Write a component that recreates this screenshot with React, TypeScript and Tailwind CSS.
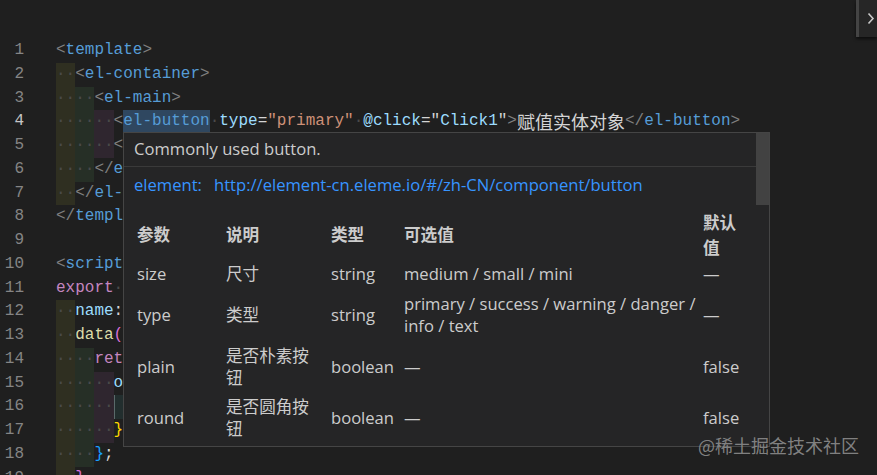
import React from "react";

type Tok = [string, string, string?];

const P = "#808080";
const TAG = "#569cd6";
const ATTR = "#9cdcfe";
const STR = "#ce9178";
const TXT = "#d4d4d4";
const KW = "#c586c0";
const FN = "#dcdcaa";
const GOLD = "#ffd700";
const ORCH = "#da70d6";
const BLUE = "#179fff";
const DOT = "#4a4a4a";

const INDENT_BG = ["#2f2f21", "#262f26", "#2f262f", "#222e2e"];

const lines: { indent: number; toks: Tok[] }[] = [
  { indent: 0, toks: [["<", P], ["template", TAG], [">", P]] },
  { indent: 1, toks: [["<", P], ["el-container", TAG], [">", P]] },
  { indent: 2, toks: [["<", P], ["el-main", TAG], [">", P]] },
  {
    indent: 3,
    toks: [
      ["<", P],
      ["el-button", TAG, "hl"],
      ["·", DOT],
      ["type", ATTR],
      ["=", TXT],
      ['"primary"', STR],
      ["·", DOT],
      ["@click", ATTR],
      ["=", TXT],
      ['"', TXT],
      ["Click1", ATTR],
      ['"', TXT],
      [">", P],
      ["赋值实体对象", TXT, "cjk"],
      ["</", P],
      ["el-button", TAG],
      [">", P],
    ],
  },
  { indent: 3, toks: [["<", P]] },
  { indent: 2, toks: [["</", P], ["e", TAG]] },
  { indent: 1, toks: [["</", P], ["el-", TAG]] },
  { indent: 0, toks: [["</", P], ["templ", TAG]] },
  { indent: 0, toks: [] },
  { indent: 0, toks: [["<", P], ["script", TAG]] },
  { indent: 0, toks: [["export", KW], ["·", DOT]] },
  { indent: 1, toks: [["name", ATTR], [":", TXT]] },
  { indent: 1, toks: [["data", FN], ["(", ORCH]] },
  { indent: 2, toks: [["ret", KW]] },
  { indent: 3, toks: [["o", ATTR]] },
  { indent: 4, toks: [] },
  { indent: 3, toks: [["}", GOLD]] },
  { indent: 2, toks: [["}", BLUE], [";", TXT]] },
  { indent: 1, toks: [["}", ORCH]] },
];

function CodeLine({ n, indent, toks }: { n: number; indent: number; toks: Tok[] }) {
  const shown = n === 16 ? 3 : indent;
  return (
    <div className="flex h-[23.76px] leading-[23.76px] whitespace-pre">
      <div className={`w-[24px] shrink-0 text-right ${n === 4 ? "text-[#c6c6c6]" : "text-[#858585]"}`}>{n}</div>
      <div className="ml-[32px] flex">
        {Array.from({ length: shown }).map((_, i) => (
          <span key={i} className="shrink-0 text-[#4a4a4a]" style={{ backgroundColor: INDENT_BG[i % 4] }}>
            ··
          </span>
        ))}
        {n === 16 && <span className="w-[9px] shrink-0 border-l border-[#5a6a6a] bg-[#222e2e]" />}
        {toks.map((t, i) =>
          t[2] === "cjk" ? (
            <span key={i} className="shrink-0 font-['Noto_Sans_CJK_SC',sans-serif] text-[18px]" style={{ color: t[1] }}>
              {t[0]}
            </span>
          ) : (
            <span key={i} className={`shrink-0 ${t[2] === "hl" ? "bg-[#2f4760]" : ""}`} style={{ color: t[1] }}>
              {t[0]}
            </span>
          )
        )}
      </div>
    </div>
  );
}

const rows = [
  { h: "h-[32px]", c: ["size", "尺寸", "string", "medium / small / mini", "—"] },
  { h: "h-[50px]", c: ["type", "类型", "string", "primary / success / warning / danger /\ninfo / text", "—"] },
  { h: "h-[54px]", c: ["plain", "是否朴素按\n钮", "boolean", "—", "false"] },
  { h: "h-[48px]", c: ["round", "是否圆角按\n钮", "boolean", "—", "false"] },
];

const colW = ["w-[89px]", "w-[105px]", "w-[73px]", "w-[299px]", "w-[53px]"];

export default function App() {
  return (
    <div className="relative h-[475px] w-[877px] overflow-hidden bg-[#1f1f1f] font-['Liberation_Mono',monospace] text-[16px]">
      <div className="pt-[39px]">
        {lines.map((l, i) => (
          <CodeLine key={i} n={i + 1} indent={l.indent} toks={l.toks} />
        ))}
      </div>

      {/* top-right panel toggle */}
      <div className="absolute right-0 top-0 flex h-[37px] w-[21px] items-center border-l-[3px] border-[#444444] bg-[#262626] pl-[8px] shadow-[0_2px_3px_rgba(0,0,0,0.6)]">
        <svg width="8" height="13" viewBox="0 0 8 13" fill="none">
          <path d="M1.5 1.5 L6 6.5 L1.5 11.5" stroke="#c8c8c8" strokeWidth="1.6" />
        </svg>
      </div>

      {/* hover tooltip */}
      <div className="absolute left-[123px] top-[132px] z-10 h-[315px] w-[647px] border border-[#454545] bg-[#252526] font-['Open_Sans','Noto_Sans_CJK_SC',sans-serif] text-[16.6px] text-[#cccccc]">
        <div className="absolute right-0 top-0 h-[72px] w-[13px] bg-[#424242]" />
        <div className="mr-[13px]">
          <div className="flex h-[34px] items-center border-b border-[#3a3a3a] pl-[10px]">Commonly used button.</div>
          <div className="flex h-[36px] items-center pl-[10px] text-[#3794ff]">
            <span className="w-[80px] shrink-0">element:</span>
            <span>http://element-cn.eleme.io/#/zh-CN/component/button</span>
          </div>
          <div className="mt-[8px] pl-[13px] leading-[22px]">
            <div className="flex h-[47px] items-center font-bold">
              <div className={colW[0]}>参数</div>
              <div className={colW[1]}>说明</div>
              <div className={colW[2]}>类型</div>
              <div className={colW[3]}>可选值</div>
              <div className={`${colW[4]} leading-[25px]`}>
                默认
                <br />值
              </div>
            </div>
            {rows.map((r, i) => (
              <div key={i} className={`flex items-center ${r.h}`}>
                {r.c.map((c, j) => (
                  <div key={j} className={`${colW[j]} whitespace-pre-line`}>
                    {c}
                  </div>
                ))}
              </div>
            ))}
          </div>
        </div>
      </div>

      {/* watermark */}
      <div className="absolute left-[698px] top-[432px] z-20 font-['Noto_Sans_CJK_SC',sans-serif] text-[18px] leading-[26px] text-[#8e8e8e]/90">
        @稀土掘金技术社区
      </div>
    </div>
  );
}
